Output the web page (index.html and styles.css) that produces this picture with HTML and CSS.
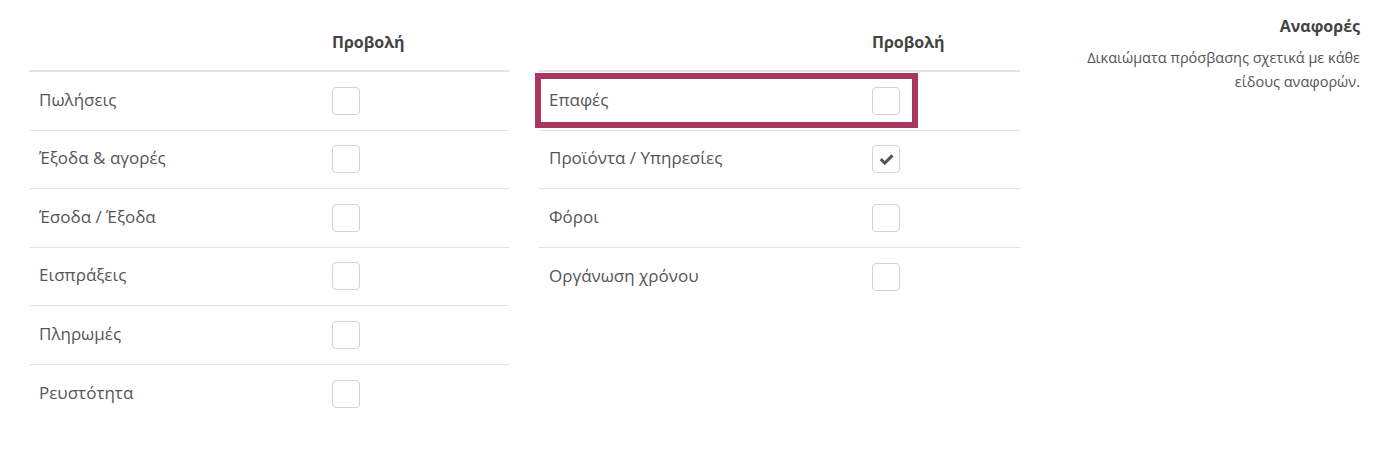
FILE: index.html
```html
<!DOCTYPE html>
<html lang="el">
<head>
<meta charset="utf-8">
<title>Αναφορές</title>
<link rel="stylesheet" href="styles.css">
</head>
<body>
<div class="page">
  <div class="perm-table perm-left">
    <div class="row head"><div class="label"></div><div class="col">Προβολή</div></div>
    <div class="row"><div class="label">Πωλήσεις</div><div class="col"><span class="box"></span></div></div>
    <div class="row"><div class="label">Έξοδα &amp; αγορές</div><div class="col"><span class="box"></span></div></div>
    <div class="row"><div class="label">Έσοδα / Έξοδα</div><div class="col"><span class="box"></span></div></div>
    <div class="row"><div class="label">Εισπράξεις</div><div class="col"><span class="box"></span></div></div>
    <div class="row"><div class="label">Πληρωμές</div><div class="col"><span class="box"></span></div></div>
    <div class="row last"><div class="label">Ρευστότητα</div><div class="col"><span class="box"></span></div></div>
  </div>
  <div class="perm-table perm-mid">
    <div class="row head"><div class="label"></div><div class="col">Προβολή</div></div>
    <div class="row highlighted"><div class="label">Επαφές</div><div class="col"><span class="box"></span></div><span class="highlight"></span></div>
    <div class="row"><div class="label">Προϊόντα / Υπηρεσίες</div><div class="col"><span class="box checked"><svg viewBox="0 0 16 16" width="17" height="17"><path d="M1.6 8.6 L3.6 6.6 L6.4 9.3 L12.6 3.1 L14.6 5.1 L6.4 13.3 Z" fill="#555"/></svg></span></div></div>
    <div class="row"><div class="label">Φόροι</div><div class="col"><span class="box"></span></div></div>
    <div class="row last"><div class="label">Οργάνωση χρόνου</div><div class="col"><span class="box"></span></div></div>
  </div>
  <div class="side">
    <h3 class="side-title">Αναφορές</h3>
    <p class="side-desc">Δικαιώματα πρόσβασης σχετικά με κάθε<br>είδους αναφορών.</p>
  </div>
</div>
</body>
</html>
```

FILE: styles.css
```css
html, body {
  margin: 0;
  padding: 0;
  background: #fff;
}
body {
  font-family: "Open Sans", "Noto Sans", sans-serif;
  color: #555;
  font-size: 17px;
}
.page {
  display: flex;
  align-items: flex-start;
  padding-left: 29px;
  padding-right: 23px;
}
.perm-table {
  display: flex;
  flex-direction: column;
}
.perm-left {
  width: 480px;
  margin-right: 30px;
}
.perm-mid {
  width: 481px;
}
.perm-left .label { width: 303px; }
.perm-mid .label { width: 333px; }
.row {
  position: relative;
  display: flex;
  align-items: center;
  height: 58.5px;
  box-sizing: border-box;
  border-bottom: 1px solid #e3e3e3;
}
.row.last { border-bottom: none; }
.row.head {
  height: 72px;
  align-items: flex-end;
  padding-bottom: 17px;
  border-bottom: 2px solid #e4e4e6;
  font-weight: 700;
  color: #444;
  font-size: 16px;
}
.label {
  box-sizing: border-box;
  padding-left: 10px;
  padding-bottom: 2px;
  line-height: 22px;
}
.row.head .label { padding-left: 0; padding-bottom: 0; }
.col {
  line-height: 22px;
}
.box {
  display: flex;
  align-items: center;
  justify-content: center;
  width: 28px;
  height: 28px;
  box-sizing: border-box;
  border: 1px solid #d2d2d2;
  border-radius: 4px;
  background: #fff;
}
.highlight {
  position: absolute;
  left: -4px;
  top: 1px;
  width: 383px;
  height: 55px;
  box-sizing: border-box;
  border: 6px solid #a83761;
  pointer-events: none;
}
.side {
  flex: 1;
  text-align: right;
}
.side-title {
  margin: 15px 0 0;
  font-size: 16px;
  font-weight: 700;
  color: #444;
  line-height: 22px;
}
.side-desc {
  margin: 9px 0 0;
  font-size: 14.5px;
  line-height: 24px;
  color: #555;
}
```
